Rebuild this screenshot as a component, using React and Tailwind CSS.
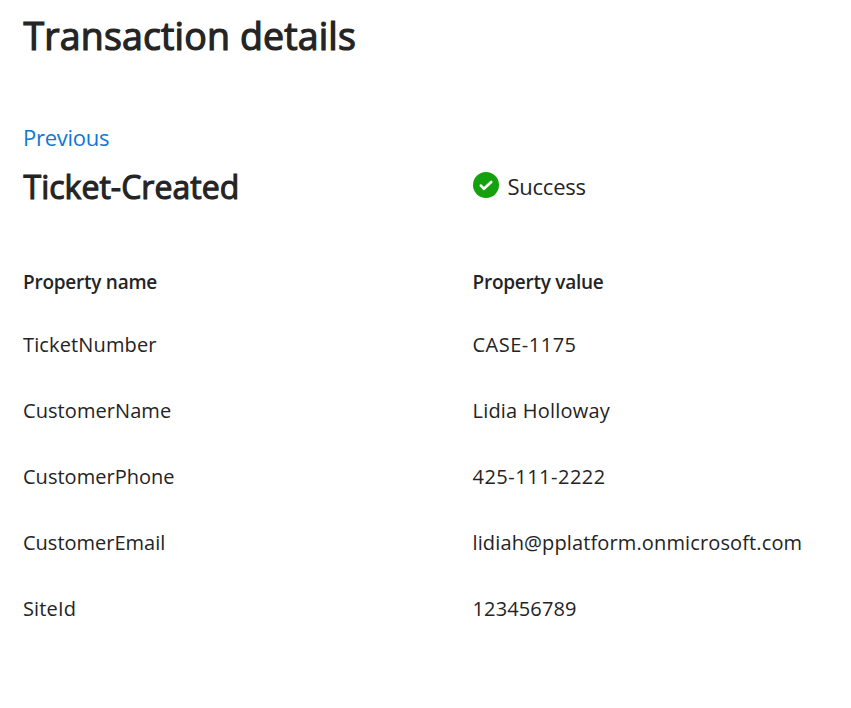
const properties = [
  { name: "TicketNumber", nameStyle: "tracking-[0.13px]", value: "CASE-1175", valueStyle: "tracking-[0.5px]" },
  { name: "CustomerName", nameStyle: "tracking-[0.07px]", value: "Lidia Holloway", valueStyle: "tracking-[0.2px]" },
  { name: "CustomerPhone", nameStyle: "tracking-[0.02px]", value: "425-111-2222", valueStyle: "tracking-[0.5px]" },
  { name: "CustomerEmail", nameStyle: "tracking-normal", value: "lidiah@pplatform.onmicrosoft.com", valueStyle: "tracking-[0.13px]" },
  { name: "SiteId", nameStyle: "tracking-[0.15px]", value: "123456789", valueStyle: "tracking-[0.13px]" },
];

function SuccessIcon() {
  return (
    <svg width="26" height="26" viewBox="0 0 26 26" fill="none" className="mb-[3px] block shrink-0" aria-hidden="true">
      <circle cx="13" cy="13" r="13" fill="#13a10e" />
      <path d="M7.9 13.6L10.9 16.8L18.2 9.9" stroke="#fff" strokeWidth="2.7" strokeLinecap="round" strokeLinejoin="round" />
    </svg>
  );
}

export default function App() {
  return (
    <main className="min-h-[708px] w-[851px] bg-white pl-[23px] font-['Open_Sans',sans-serif] whitespace-nowrap text-[#242424]">
      <h1 className="flex h-[70px] items-center pt-0.5 pl-[0.5px] text-[37.5px] leading-none tracking-[0.15px] [-webkit-text-stroke:1.2px_#242424]">
        <span>Transaction details</span>
      </h1>
      <div className="mt-[49px] flex h-[35px] items-center text-[22px] leading-none tracking-[-0.25px] text-[#0f78d4]">
        <a href="#previous">Previous</a>
      </div>
      <div className="grid h-16 grid-cols-[450px_1fr] items-center">
        <h2 className="pt-0.5 pl-[0.5px] text-[32px] leading-none tracking-[0.02px] [-webkit-text-stroke:1.1px_#242424]">Ticket-Created</h2>
        <div className="flex items-center gap-2">
          <SuccessIcon />
          <span className="pl-[0.5px] text-[22px] leading-none tracking-[-0.25px]">Success</span>
        </div>
      </div>
      <table className="mt-[34px] w-full table-fixed border-collapse text-left">
        <colgroup>
          <col className="w-[449px]" />
          <col />
        </colgroup>
        <thead>
          <tr className="h-[60px] text-[19px] leading-none">
            <th className="p-0 font-semibold tracking-[-0.25px]">Property name</th>
            <th className="p-0 pl-[0.5px] font-semibold tracking-[-0.25px]">Property value</th>
          </tr>
        </thead>
        <tbody>
          {properties.map((property) => (
            <tr key={property.name} className="h-[66px] text-[20px] leading-none">
              <td className={`p-0 ${property.nameStyle}`}>{property.name}</td>
              <td className={`p-0 pl-[0.5px] ${property.valueStyle}`}>{property.value}</td>
            </tr>
          ))}
        </tbody>
      </table>
    </main>
  );
}
